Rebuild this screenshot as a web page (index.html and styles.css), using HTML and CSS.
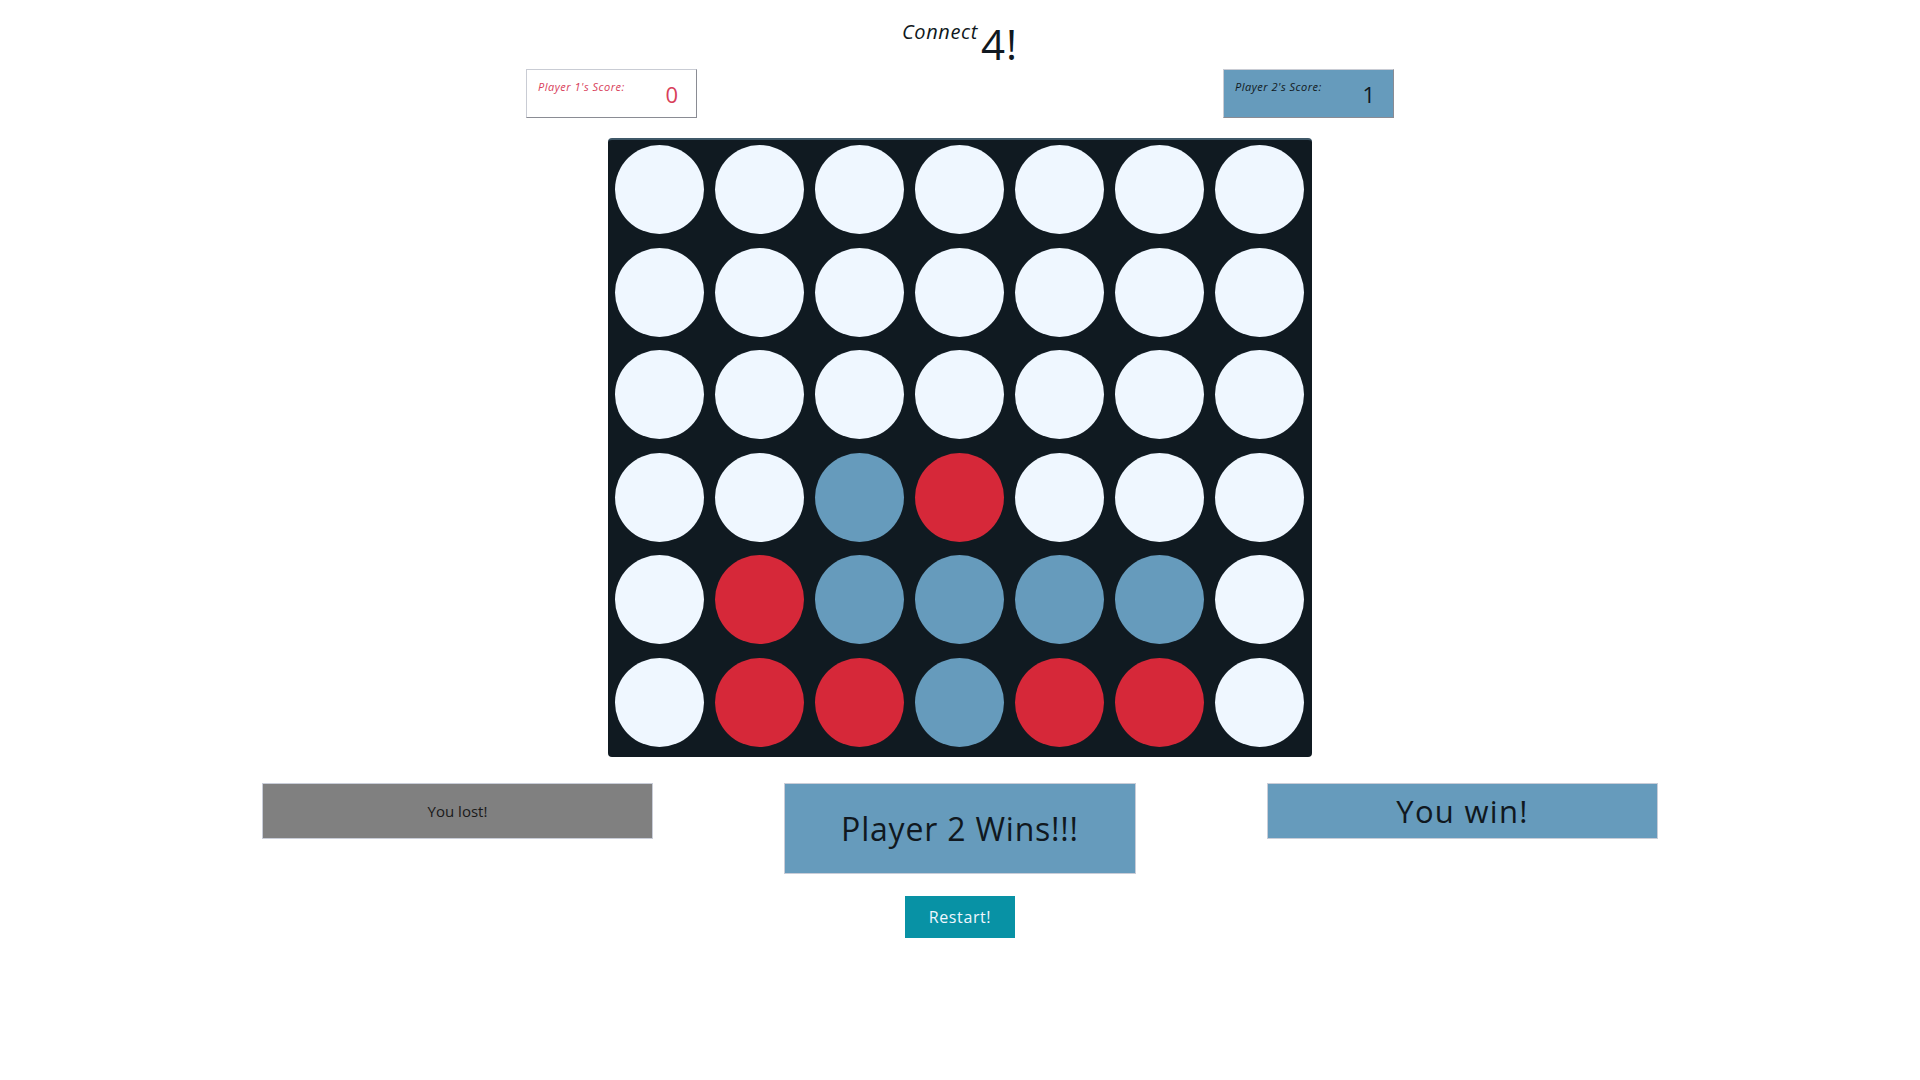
FILE: index.html
```html
<!DOCTYPE html>
<html lang="en">
<head>
<meta charset="utf-8">
<title>Connect 4!</title>
<link rel="stylesheet" href="styles.css">
</head>
<body>
<header class="title">
  <span class="title-connect">Connect</span><span class="title-four">4!</span>
</header>

<section class="scores">
  <div class="score score-p1">
    <span class="score-label">Player 1's Score:</span>
    <span class="score-value">0</span>
  </div>
  <div class="score score-p2">
    <span class="score-label">Player 2's Score:</span>
    <span class="score-value">1</span>
  </div>
</section>

<main class="board">
  <div class="cell"></div><div class="cell"></div><div class="cell"></div><div class="cell"></div><div class="cell"></div><div class="cell"></div><div class="cell"></div>
  <div class="cell"></div><div class="cell"></div><div class="cell"></div><div class="cell"></div><div class="cell"></div><div class="cell"></div><div class="cell"></div>
  <div class="cell"></div><div class="cell"></div><div class="cell"></div><div class="cell"></div><div class="cell"></div><div class="cell"></div><div class="cell"></div>
  <div class="cell"></div><div class="cell"></div><div class="cell blue"></div><div class="cell red"></div><div class="cell"></div><div class="cell"></div><div class="cell"></div>
  <div class="cell"></div><div class="cell red"></div><div class="cell blue"></div><div class="cell blue"></div><div class="cell blue"></div><div class="cell blue"></div><div class="cell"></div>
  <div class="cell"></div><div class="cell red"></div><div class="cell red"></div><div class="cell blue"></div><div class="cell red"></div><div class="cell red"></div><div class="cell"></div>
</main>

<section class="results">
  <div class="result result-lost">You lost!</div>
  <div class="result result-winner">Player 2 Wins!!!</div>
  <div class="result result-win">You win!</div>
</section>

<div class="actions">
  <button class="restart" type="button">Restart!</button>
</div>
</body>
</html>
```

FILE: styles.css
```css
html, body {
  margin: 0;
  padding: 0;
  background: #ffffff;
}

body {
  font-family: "Open Sans", "Liberation Sans", sans-serif;
  color: #101820;
}

.title {
  display: flex;
  justify-content: center;
  align-items: flex-start;
  height: 69px;
  gap: 3px;
}

.title-connect {
  font-style: italic;
  font-size: 20px;
  line-height: 1;
  margin-top: 22px;
  letter-spacing: 0.6px;
  color: #101820;
}

.title-four {
  font-size: 42px;
  line-height: 1;
  margin-top: 23px;
  letter-spacing: 1px;
  color: #101820;
}

.scores {
  display: flex;
  justify-content: center;
  gap: 526px;
}

.score {
  box-sizing: border-box;
  width: 171px;
  height: 49px;
  display: flex;
  justify-content: space-between;
  align-items: flex-start;
  padding: 10px 18px 0 11px;
  border: 1px solid;
  border-color: #c9ccd4 #8a8c94 #8a8c94 #c9ccd4;
}

.score-label {
  font-style: italic;
  font-size: 11px;
  line-height: 14px;
  letter-spacing: 0.5px;
}

.score-value {
  font-size: 22px;
  line-height: 26px;
  margin-top: 1px;
}

.score-p1 {
  background: #ffffff;
  color: #d8405a;
}

.score-p2 {
  background: #669bbc;
  color: #101820;
}

.board {
  box-sizing: border-box;
  width: 704px;
  height: 619px;
  margin: 20px auto 0;
  padding: 5px 8px 10px 7px;
  background: #101a21;
  border-top: 2px solid #3f5868;
  border-radius: 4px;
  display: grid;
  grid-template-columns: repeat(7, 89px);
  grid-auto-rows: 89px;
  column-gap: 11px;
  row-gap: 13.6px;
}

.cell {
  border-radius: 50%;
  background: #eff7ff;
}

.cell.red {
  background: #d62839;
}

.cell.blue {
  background: #669bbc;
}

.results {
  display: flex;
  justify-content: center;
  align-items: flex-start;
  gap: 131px;
  margin-top: 26px;
}

.result {
  box-sizing: border-box;
  display: flex;
  align-items: center;
  justify-content: center;
  border: 1px solid #c9cdd8;
  color: #101820;
}

.result-lost {
  width: 391px;
  height: 56px;
  background: #808080;
  font-size: 15px;
  color: #1a1a1a;
}

.result-winner {
  width: 352px;
  height: 91px;
  background: #669bbc;
  font-size: 32px;
  letter-spacing: 0.8px;
}

.result-win {
  width: 391px;
  height: 56px;
  background: #669bbc;
  font-size: 31px;
  letter-spacing: 1.3px;
}

.actions {
  display: flex;
  justify-content: center;
  margin-top: 22px;
}

.restart {
  width: 110px;
  height: 42px;
  border: none;
  background: #0892a5;
  color: #f0f7ff;
  font-family: "Open Sans", "Liberation Sans", sans-serif;
  font-size: 16px;
  letter-spacing: 0.6px;
  padding: 0;
}
```
